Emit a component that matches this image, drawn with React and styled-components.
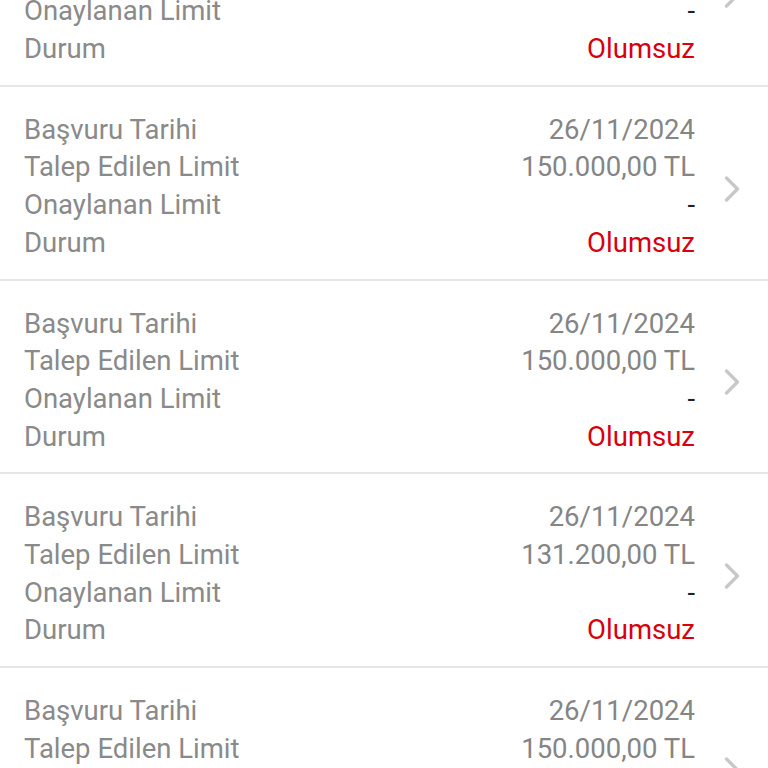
import React from "react";
import styled, { createGlobalStyle } from "styled-components";

const GlobalStyle = createGlobalStyle`
  html, body {
    margin: 0;
    padding: 0;
    background: #ffffff;
    overflow: hidden;
  }
  body {
    font-family: Roboto, "Noto Sans", "Liberation Sans", sans-serif;
  }
`;

const Screen = styled.div`
  width: 768px;
  height: 768px;
  overflow: hidden;
  background: #ffffff;
`;

const List = styled.div`
  display: flex;
  flex-direction: column;
  margin-top: -107px;
`;

const Card = styled.div`
  display: flex;
  align-items: center;
  padding: 24px 26px 17px 24px;
  border-bottom: 2px solid #e6e6e6;
`;

const Rows = styled.div`
  flex: 1;
  display: flex;
  flex-direction: column;
`;

const Row = styled.div`
  display: flex;
  justify-content: space-between;
  align-items: center;
  height: 37.7px;
  font-size: 27.5px;
  line-height: 37.7px;
`;

const Label = styled.span`
  color: #8a8a8a;
`;

const Value = styled.span`
  color: ${({ tone }) =>
    tone === "red" ? "#d9000d" : tone === "dark" ? "#222222" : "#858585"};
`;

const Chevron = styled.div`
  width: 20px;
  margin-left: 27px;
  display: flex;
  align-items: center;
  justify-content: center;
  margin-top: 5px;
`;

const applications = [
  { date: "26/11/2024", requested: "150.000,00 TL" },
  { date: "26/11/2024", requested: "150.000,00 TL" },
  { date: "26/11/2024", requested: "150.000,00 TL" },
  { date: "26/11/2024", requested: "131.200,00 TL" },
  { date: "26/11/2024", requested: "150.000,00 TL" },
];

function ApplicationCard({ item }) {
  return (
    <Card>
      <Rows>
        <Row>
          <Label>Başvuru Tarihi</Label>
          <Value>{item.date}</Value>
        </Row>
        <Row>
          <Label>Talep Edilen Limit</Label>
          <Value>{item.requested}</Value>
        </Row>
        <Row>
          <Label>Onaylanan Limit</Label>
          <Value tone="dark">-</Value>
        </Row>
        <Row>
          <Label>Durum</Label>
          <Value tone="red">Olumsuz</Value>
        </Row>
      </Rows>
      <Chevron>
        <svg width="20" height="28" viewBox="0 0 20 28">
          <path
            d="M4.5 3 L15.5 14 L4.5 25"
            fill="none"
            stroke="#c8c8c8"
            strokeWidth="3.4"
            strokeLinecap="round"
            strokeLinejoin="round"
          />
        </svg>
      </Chevron>
    </Card>
  );
}

export default function App() {
  return (
    <Screen>
      <GlobalStyle />
      <List>
        {applications.map((item, i) => (
          <ApplicationCard key={i} item={item} />
        ))}
      </List>
    </Screen>
  );
}
